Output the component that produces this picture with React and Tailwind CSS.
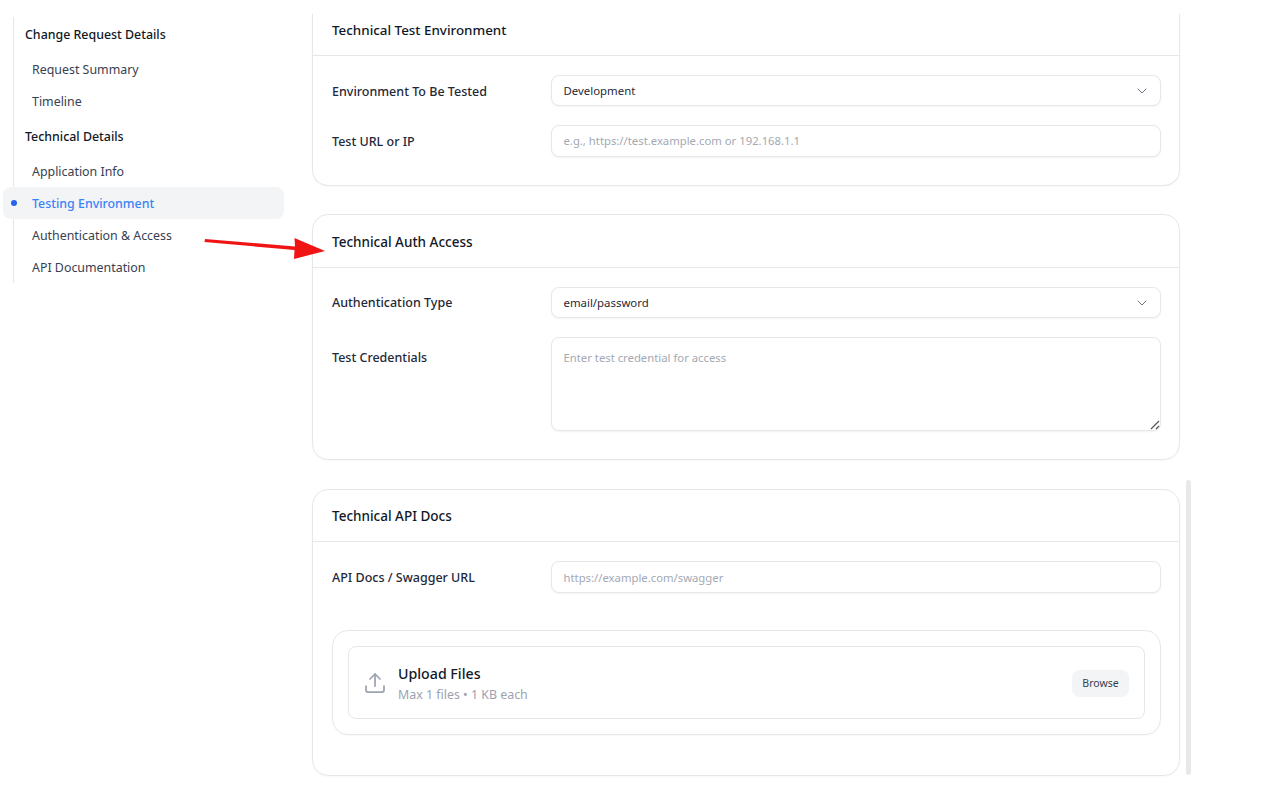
import React from "react";
import { ChevronDown, Upload } from "lucide-react";

const NavHead = ({ children }) => (
  <div className="h-8 pl-[11px] pt-[2px] flex items-center text-[12.4px] font-medium text-[#111827]">{children}</div>
);
const NavItem = ({ children, active }) => (
  <div className={`relative h-8 ml-[-11px] pl-[29px] pt-[2px] flex items-center text-[12.4px] rounded-lg ${active ? "bg-[#f3f4f6] text-[#3b82f6] font-medium" : "text-[#374151]"}`}>
    {active && <span className="absolute left-[8px] top-[13px] w-[6px] h-[6px] rounded-full bg-[#2563eb]" />}
    {children}
  </div>
);
const Label = ({ children, className = "pt-[2px]" }) => (
  <div className={`w-[219px] shrink-0 text-[12.5px] font-medium text-[#1f2937] ${className}`}>{children}</div>
);
const Field = ({ children, className = "" }) => (
  <div className={`flex-1 border border-[#e5e7eb] rounded-lg shadow-[0_1px_2px_rgba(0,0,0,0.05)] pl-[11.5px] flex items-center text-[11.4px] bg-white ${className}`}>{children}</div>
);
const Select = ({ value }) => (
  <Field className="h-[31px] justify-between pr-[10px] text-[#1f2937]">
    <span>{value}</span>
    <ChevronDown size={16} strokeWidth={1.5} className="text-[#6b7280]" />
  </Field>
);
const Placeholder = ({ children }) => <span className="text-[11.3px] text-[#a3a9b3]">{children}</span>;
const Title = ({ children, className = "" }) => (
  <div className={`px-[19px] pt-[2px] flex items-center border-b border-[#e5e7eb] text-[13.5px] font-medium text-[#111827] ${className}`}>{children}</div>
);

export default function App() {
  return (
    <div className="relative w-[1272px] h-[811px] bg-white overflow-hidden flex items-start pt-[14px] [font-family:'Noto_Sans',sans-serif]">
      <aside className="w-[312px] shrink-0 pt-[4px] pl-[13px]">
        <div className="w-[271px] border-l border-[#e5e7eb] -mt-[1px] pt-[1px]">
          <NavHead>Change Request Details</NavHead>
          <div className="h-[3px]" />
          <NavItem>Request Summary</NavItem>
          <NavItem>Timeline</NavItem>
          <div className="h-[3px]" />
          <NavHead>Technical Details</NavHead>
          <div className="h-[3px]" />
          <NavItem>Application Info</NavItem>
          <NavItem active>Testing Environment</NavItem>
          <NavItem>Authentication &amp; Access</NavItem>
          <NavItem>API Documentation</NavItem>
        </div>
      </aside>

      <main className="w-[868px] flex flex-col">
        <section className="border border-t-0 border-[#e5e7eb] rounded-b-2xl h-[172px] shadow-[0_1px_2px_rgba(0,0,0,0.03)]">
          <div className="h-[42px] px-[19px] flex items-center pb-[8px] border-b border-[#e5e7eb] text-[13.4px] font-medium text-[#111827]">Technical Test Environment</div>
          <div className="pl-[19px] pr-[18px] pt-[19px] flex flex-col gap-[19px]">
            <div className="flex items-center">
              <Label className="pt-[4px]">Environment To Be Tested</Label>
              <Select value="Development" />
            </div>
            <div className="flex items-center">
              <Label>Test URL or IP</Label>
              <Field className="h-[32px]"><Placeholder>e.g., https://test.example.com or 192.168.1.1</Placeholder></Field>
            </div>
          </div>
        </section>

        <section className="mt-[28px] border border-[#e5e7eb] rounded-2xl h-[246px] shadow-[0_1px_2px_rgba(0,0,0,0.03)]">
          <Title className="h-[53px]">Technical Auth Access</Title>
          <div className="pl-[19px] pr-[18px] pt-[19px] flex flex-col gap-[19px]">
            <div className="flex items-center">
              <Label>Authentication Type</Label>
              <Select value="email/password" />
            </div>
            <div className="flex items-start">
              <div className="pt-[10px]"><Label>Test Credentials</Label></div>
              <div className="relative flex-1">
                <Field className="h-[94px] items-start pt-[12px]"><Placeholder>Enter test credential for access</Placeholder></Field>
                <svg className="absolute right-[1px] bottom-[1px]" width="10" height="10" viewBox="0 0 10 10" fill="none" stroke="#555" strokeWidth="1.2">
                  <path d="M1 9 L9 1 M6 9 L9 6" />
                </svg>
              </div>
            </div>
          </div>
        </section>

        <section className="mt-[29px] border border-[#e5e7eb] rounded-2xl h-[287px] shadow-[0_1px_2px_rgba(0,0,0,0.03)]">
          <Title className="h-[52px]">Technical API Docs</Title>
          <div className="pl-[19px] pr-[18px] pt-[19px]">
            <div className="flex items-center">
              <Label>API Docs / Swagger URL</Label>
              <Field className="h-[32px] pt-[2px]"><Placeholder>https://example.com/swagger</Placeholder></Field>
            </div>
            <div className="mt-[37px] border border-[#e5e7eb] rounded-2xl p-[15px] shadow-[0_1px_2px_rgba(0,0,0,0.03)]">
              <div className="h-[73px] border border-[#e5e7eb] rounded-lg pl-[14px] pr-[15px] flex items-center">
                <Upload size={24} strokeWidth={1.75} className="text-[#9ca3af] mr-[11px]" />
                <div className="flex-1 pt-[3px]">
                  <div className="text-[14.2px] leading-[20px] font-medium text-[#111827]">Upload Files</div>
                  <div className="text-[12.4px] leading-[20px] mt-[1px] text-[#9ca3af]">Max 1 files • 1 KB each</div>
                </div>
                <button className="h-[27px] w-[57px] mt-[2px] rounded-lg bg-[#f3f4f6] text-[10.5px] text-[#374151]">Browse</button>
              </div>
            </div>
          </div>
        </section>
      </main>

      <div className="absolute left-[1186px] top-[480px] w-[5px] h-[295px] rounded-sm bg-[#e8e8ea]" />

      <svg className="absolute left-[200px] top-[232px]" width="130" height="32" viewBox="0 0 130 32">
        <path d="M5 7 L95 14.5 L94.5 6 L125 19 L94 27 L94.5 18 L4.5 10 Z" fill="#f01414" />
      </svg>
    </div>
  );
}
